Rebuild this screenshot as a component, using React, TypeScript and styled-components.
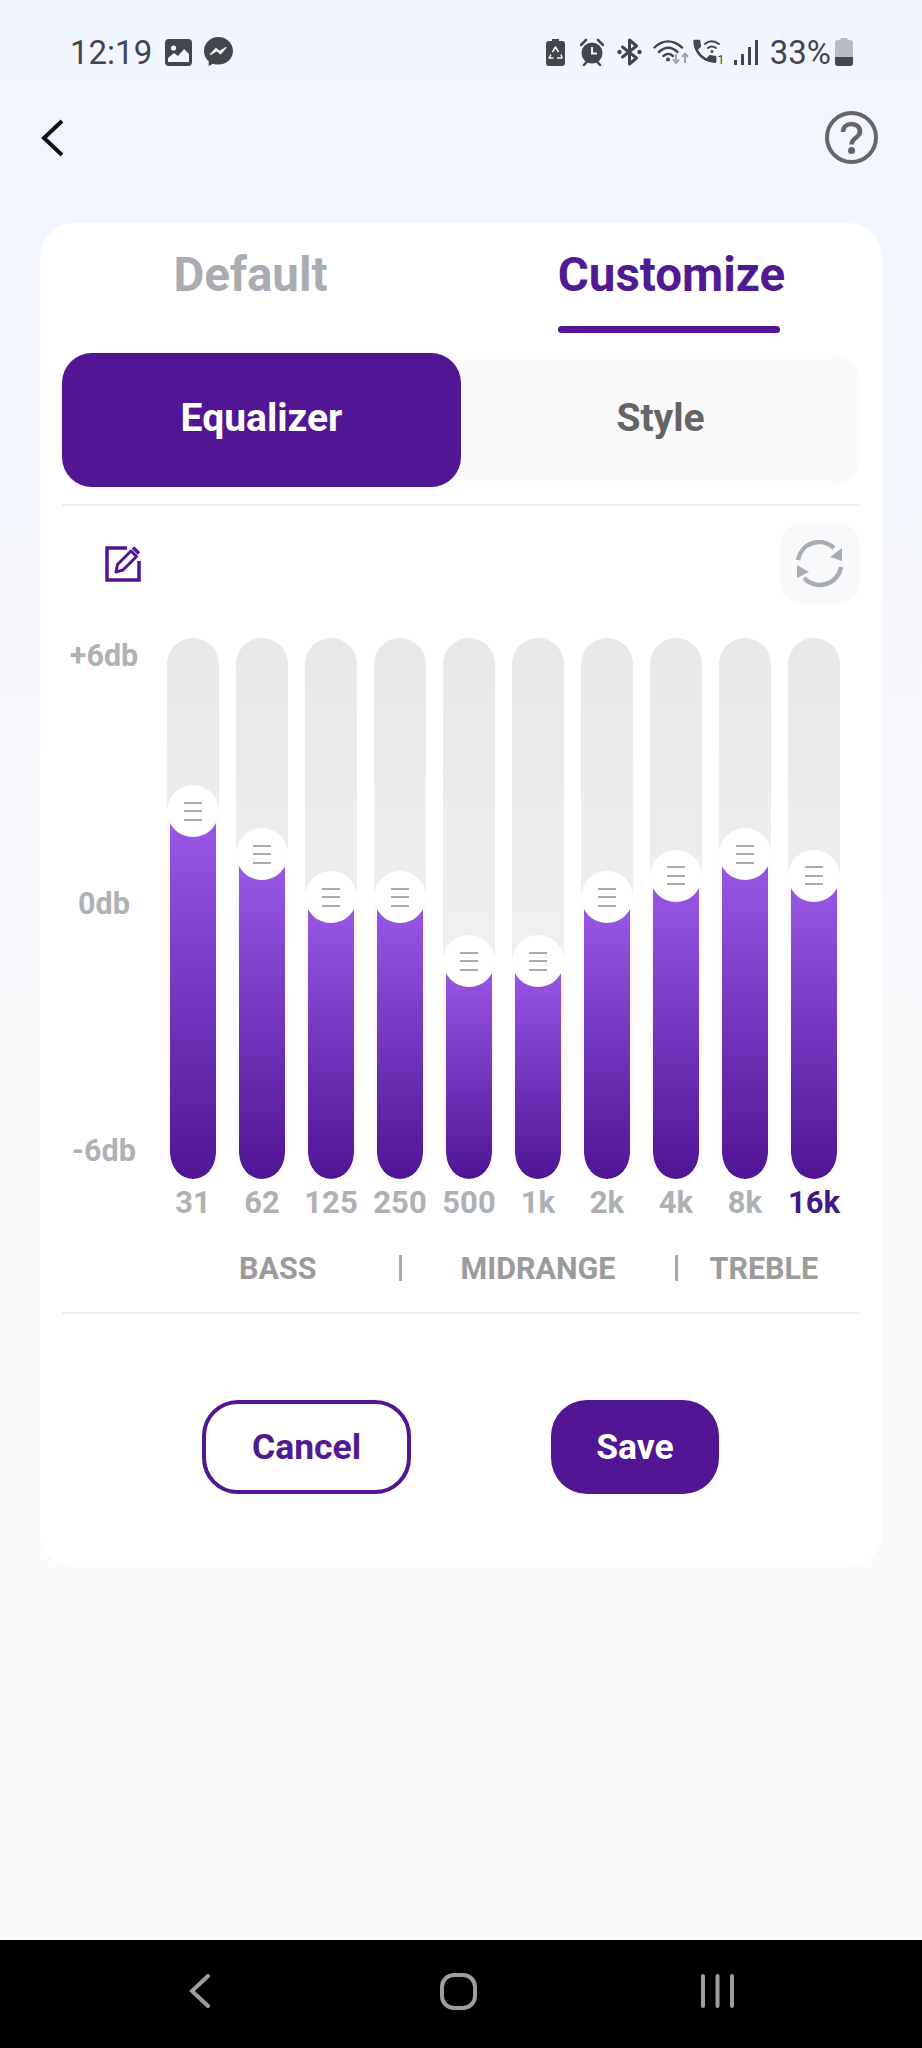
import styled, { createGlobalStyle } from 'styled-components';

const GlobalStyle = createGlobalStyle`
  html, body {
    margin: 0;
    padding: 0;
  }
  * {
    box-sizing: border-box;
  }
  body {
    font-family: Roboto, "Liberation Sans", sans-serif;
  }
`;

const Screen = styled.div`
  width: 922px;
  height: 2048px;
  display: flex;
  flex-direction: column;
  background: linear-gradient(#f1f5ff 0, #f3f6fe 260px, #fafafa 1300px);
  overflow: hidden;
`;

const StatusBar = styled.div`
  display: flex;
  align-items: center;
  height: 40px;
  margin-top: 32px;
  padding: 0 69px 0 70px;
  color: #44464c;
  font-size: 33px;
  svg {
    display: block;
    flex: none;
  }
`;

const Clock = styled.span`
  margin-right: 13px;
`;

const StatusGroup = styled.div`
  display: flex;
  align-items: center;
  gap: 12px;
`;

const StatusRight = styled.div`
  display: flex;
  align-items: center;
  margin-left: auto;
`;

const StatusSlot = styled.span<{ $gap: number }>`
  margin-left: ${(p) => p.$gap}px;
`;

const Battery = styled.span`
  margin: 0 4px 0 12px;
`;

const Header = styled.div`
  display: flex;
  justify-content: space-between;
  align-items: center;
  height: 53px;
  margin-top: 39px;
  padding: 0 44px 0 41px;
`;

const Card = styled.div`
  margin: 59px 40px 0;
  padding-bottom: 73px;
  background: #fff;
  border-radius: 34px;
`;

const Tabs = styled.div`
  display: grid;
  grid-template-columns: 1fr 1fr;
  padding-top: 25px;
`;

const Tab = styled.div<{ $active?: boolean }>`
  display: flex;
  flex-direction: column;
  align-items: center;
  font-size: 47.5px;
  line-height: 54px;
  font-weight: 700;
  color: ${(p) => (p.$active ? '#4f1a92' : '#a9adb2')};
`;

const TabLine = styled.div`
  width: 222px;
  height: 7px;
  margin: 24px 5px 0 0;
  border-radius: 4px;
  background: #521694;
`;

const Segment = styled.div`
  display: flex;
  height: 134px;
  margin: 20px 22px 0;
  background: #fafafa;
  border-radius: 30px;
`;

const SegmentItem = styled.div<{ $active?: boolean }>`
  flex: 1;
  display: flex;
  align-items: center;
  justify-content: center;
  padding-bottom: 4px;
  font-size: 39px;
  font-weight: 700;
  border-radius: 30px;
  color: ${(p) => (p.$active ? '#fff' : '#646464')};
  background: ${(p) => (p.$active ? '#521694' : 'transparent')};
`;

const Divider = styled.div<{ $top: number }>`
  height: 2px;
  margin: ${(p) => p.$top}px 22px 0;
  background: #f0f0f0;
`;

const Toolbar = styled.div`
  display: flex;
  justify-content: space-between;
  align-items: center;
  margin: 17px 22px 0;
  padding-left: 43px;
`;

const RefreshButton = styled.div`
  display: flex;
  align-items: center;
  justify-content: center;
  width: 80px;
  height: 81px;
  border-radius: 22px;
  background: #f8f9fa;
`;

const Chart = styled.div`
  display: flex;
  margin: 34px 22px 0;
`;

const Scale = styled.div`
  display: flex;
  flex-direction: column;
  justify-content: space-between;
  width: 84px;
  height: 541px;
  margin-right: 21px;
  padding: 1px 0 11px;
  text-align: center;
  font-size: 30.5px;
  line-height: 34px;
  font-weight: 700;
  color: #aeb1b5;
`;

const Bands = styled.div`
  display: flex;
  gap: 17px;
`;

const Band = styled.div`
  display: flex;
  flex-direction: column;
  align-items: center;
  width: 52px;
`;

const Track = styled.div`
  position: relative;
  width: 52px;
  height: 541px;
  border-radius: 26px;
  background: linear-gradient(#e8e8e8, #f0f0f0 65%);
`;

const Fill = styled.div`
  position: absolute;
  left: 0;
  right: 0;
  bottom: 0;
  border: solid #fdf9ff;
  border-width: 0 3px;
  border-radius: 0 0 26px 26px;
  background: linear-gradient(#9b59e8, #4f1594) padding-box;
`;

const Thumb = styled.div`
  position: absolute;
  top: -26px;
  left: -3px;
  width: 52px;
  height: 52px;
  display: flex;
  flex-direction: column;
  align-items: center;
  justify-content: center;
  gap: 6.5px;
  border-radius: 50%;
  background: #fff;
`;

const ThumbLine = styled.span`
  width: 18px;
  height: 2px;
  background: #aaaaaa;
`;

const Freq = styled.div<{ $active?: boolean }>`
  margin-top: 7px;
  white-space: nowrap;
  font-size: 31px;
  line-height: 34px;
  font-weight: 700;
  color: ${(p) => (p.$active ? '#421a84' : '#aeb1b4')};
`;

const BandLabels = styled.div`
  display: flex;
  align-items: center;
  height: 32px;
  margin-top: 32px;
  padding-left: 199px;
  color: #9b9b9b;
  font-size: 30.5px;
  font-weight: 700;
`;

const BandName = styled.span<{ $gap: number }>`
  margin-left: ${(p) => p.$gap}px;
`;

const BandRule = styled.span<{ $gap: number }>`
  width: 3px;
  height: 26px;
  margin-left: ${(p) => p.$gap}px;
  background: #a9a9a9;
`;

const Actions = styled.div`
  display: flex;
  gap: 140px;
  margin-top: 86px;
  padding-left: 162px;
`;

const Button = styled.div<{ $primary?: boolean }>`
  display: flex;
  align-items: center;
  justify-content: center;
  height: 94px;
  width: ${(p) => (p.$primary ? 168 : 209)}px;
  border-radius: 36px;
  font-size: 35.5px;
  font-weight: 700;
  color: ${(p) => (p.$primary ? '#fff' : '#4f1a92')};
  background: ${(p) => (p.$primary ? '#521694' : '#fff')};
  border: ${(p) => (p.$primary ? 'none' : '4px solid #521694')};
`;

const NavBar = styled.div`
  display: flex;
  align-items: center;
  justify-content: space-between;
  height: 108px;
  margin-top: auto;
  padding: 0 188px 6px 189px;
  background: #000;
  svg {
    display: block;
  }
`;

const NavHome = styled.span`
  margin-left: 6px;
`;

const gains = [4, 2, 0, 0, -3, -3, 0, 1, 2, 1];
const freqs = ['31', '62', '125', '250', '500', '1k', '2k', '4k', '8k', '16k'];

const ImageIcon = () => (
  <svg width="27" height="27" viewBox="0 0 27 27">
    <rect width="27" height="27" rx="4" fill="#44464c" />
    <circle cx="8.5" cy="9" r="2.6" fill="#f2f5ff" />
    <path d="M3 23v-4l6-5 4 3 6-7 5 5v8z" fill="#f2f5ff" />
  </svg>
);

const MessengerIcon = () => (
  <svg width="29" height="30" viewBox="0 0 29 30">
    <path d="M14.5 0C6.5 0 0 6 0 14c0 4.2 1.8 7.8 4.7 10.3V29l4.4-2.3c1.7.6 3.5.9 5.4.9 8 0 14.5-6 14.5-13.600S22.500 0 14.500 0z" fill="#44464c" />
    <path d="M6.500 17.500l5.500-6 3.500 3 6.500-4-5.500 6.300-3.500-3.200z" fill="#f2f5ff" stroke="#f2f5ff" strokeWidth="1.2" strokeLinejoin="round" />
  </svg>
);

const RecycleBatteryIcon = () => (
  <svg width="19" height="27" viewBox="0 0 19 27">
    <path d="M6 0h7v2h3a3 3 0 0 1 3 3v19a3 3 0 0 1-3 3H3a3 3 0 0 1-3-3V5a3 3 0 0 1 3-3h3z" fill="#44464c" />
    <path d="M6.500 13l3-5 3 5M15 15.500l1 3.500h-5M7.500 19H3l2-3.500" fill="none" stroke="#f2f5ff" strokeWidth="1.500" strokeLinejoin="round" />
  </svg>
);

const AlarmIcon = () => (
  <svg width="24" height="28" viewBox="0 0 24 28">
    <circle cx="12" cy="15" r="10.500" fill="#44464c" />
    <path d="M12 9v6.500h5" fill="none" stroke="#f2f5ff" strokeWidth="2" />
    <path d="M1 7l5-5M23 7l-5-5M4 27l3-3.500M20 27l-3-3.500" stroke="#44464c" strokeWidth="2.500" fill="none" strokeLinecap="round" />
  </svg>
);

const BluetoothIcon = () => (
  <svg width="25" height="28" viewBox="0 0 25 28">
    <path d="M12.500 14V2l7 6-14 11M12.500 14v12l7-6-14-11" fill="none" stroke="#44464c" strokeWidth="3" strokeLinejoin="round" strokeLinecap="round" />
    <circle cx="2.500" cy="14" r="2.200" fill="#44464c" />
    <circle cx="22.500" cy="14" r="2.200" fill="#44464c" />
  </svg>
);

const WifiIcon = () => (
  <svg width="36" height="26" viewBox="0 0 36 26">
    <path d="M1.500 8.500C10 .5 20 .5 29 8.500M6 13c6-5.500 12.500-5.500 18.500 0M10.500 17c3.500-3 6-3 9.500 0" fill="none" stroke="#44464c" strokeWidth="2.400" strokeLinecap="round" />
    <circle cx="15" cy="20.500" r="2" fill="#44464c" />
    <path d="M23 15v8M20 20.500l3 3.500 3-3.500M32 24v-9M29 18l3-3.500 3 3.500" fill="none" stroke="#a3a5ab" strokeWidth="2" />
  </svg>
);

const CallIcon = () => (
  <svg width="31" height="27" viewBox="0 0 31 27">
    <g transform="translate(-3.500 -3) scale(1.280)">
      <path d="M6.620 10.790c1.440 2.830 3.760 5.140 6.590 6.590l2.200-2.200c.27-.27.67-.36 1.020-.24 1.120.37 2.330.57 3.570.57.55 0 1 .45 1 1V20c0 .55-.45 1-1 1-9.390 0-17-7.610-17-17 0-.55.450-1 1-1h3.500c.55 0 1 .45 1 1 0 1.250.2 2.450.57 3.570.11.35.03.74-.25 1.020l-2.200 2.200z" fill="#44464c" />
    </g>
    <path d="M12 5c4-3.500 9-3.500 14 0M15 9c2.500-2 5-2 8 0" fill="none" stroke="#44464c" strokeWidth="2" strokeLinecap="round" />
    <circle cx="19" cy="12.500" r="1.500" fill="#44464c" />
    <text x="24.500" y="25" fontSize="12" fontFamily="Roboto, sans-serif" fill="#44464c">1</text>
  </svg>
);

const SignalIcon = () => (
  <svg width="24" height="25" viewBox="0 0 24 25">
    <rect x="0" y="20" width="3" height="5" fill="#44464c" />
    <rect x="7" y="14" width="3" height="11" fill="#44464c" />
    <rect x="14" y="7" width="3" height="18" fill="#44464c" />
    <rect x="21" y="0" width="3" height="25" fill="#44464c" />
  </svg>
);

const BatteryIcon = () => (
  <svg width="18" height="28" viewBox="0 0 18 28">
    <path d="M5.500 0h7v2H15a3 3 0 0 1 3 3v20a3 3 0 0 1-3 3H3a3 3 0 0 1-3-3V5a3 3 0 0 1 3-3h2.500z" fill="#b9bac4" />
    <path d="M0 19h18v6a3 3 0 0 1-3 3H3a3 3 0 0 1-3-3z" fill="#44464c" />
  </svg>
);

const BackIcon = () => (
  <svg width="23" height="38" viewBox="0 0 23 38">
    <path d="M21 2L3 19l18 17" fill="none" stroke="#111" strokeWidth="4" />
  </svg>
);

const HelpIcon = () => (
  <svg width="53" height="53" viewBox="0 0 53 53">
    <circle cx="26.500" cy="26.500" r="24.500" fill="none" stroke="#666" strokeWidth="4" />
    <path d="M18 21c0-5 3.800-8 8.500-8s8.500 3 8.500 7.500c0 6-8.500 6.500-8.500 13" fill="none" stroke="#666" strokeWidth="4.500" />
    <circle cx="26.500" cy="39.500" r="3.500" fill="#666" />
  </svg>
);

const EditIcon = () => (
  <svg width="36" height="36" viewBox="0 0 36 36">
    <path d="M22 2H2v32h32V15" fill="none" stroke="#521694" strokeWidth="3.500" />
    <path d="M11 26l1.500-7.500L26 5l5.500 5.500L18 24z" fill="none" stroke="#521694" strokeWidth="3" strokeLinejoin="round" />
    <path d="M28 1.500l6 6" stroke="#521694" strokeWidth="3.500" />
  </svg>
);

const RefreshIcon = () => (
  <svg width="48" height="48" viewBox="0 0 48 48">
    <path d="M2 20A21.500 21.500 0 0 1 38 8M45 27A21.500 21.500 0 0 1 8 38" fill="none" stroke="#a9adb1" strokeWidth="4.500" />
    <path d="M46 8V21L34 17zM1 25V38L13 32z" fill="#a9adb1" />
  </svg>
);

const NavBackIcon = () => (
  <svg width="21" height="34" viewBox="0 0 21 34">
    <path d="M19 2L3 17l16 15" fill="none" stroke="#9e9e9e" strokeWidth="4" strokeLinecap="round" />
  </svg>
);

const NavHomeIcon = () => (
  <svg width="37" height="37" viewBox="0 0 37 37">
    <rect x="2" y="2" width="33" height="33" rx="12" fill="none" stroke="#9e9e9e" strokeWidth="4" />
  </svg>
);

const NavRecentsIcon = () => (
  <svg width="33" height="34" viewBox="0 0 33 34">
    <path d="M2 2v30M16.500 2v30M31 2v30" fill="none" stroke="#9e9e9e" strokeWidth="4" strokeLinecap="round" />
  </svg>
);

const App = () => {
  return (
    <Screen>
      <GlobalStyle />
      <StatusBar>
        <Clock>12:19</Clock>
        <StatusGroup>
          <ImageIcon />
          <MessengerIcon />
        </StatusGroup>
        <StatusRight>
          <RecycleBatteryIcon />
          <StatusSlot $gap={15}>
            <AlarmIcon />
          </StatusSlot>
          <StatusSlot $gap={13}>
            <BluetoothIcon />
          </StatusSlot>
          <StatusSlot $gap={11}>
            <WifiIcon />
          </StatusSlot>
          <StatusSlot $gap={4}>
            <CallIcon />
          </StatusSlot>
          <StatusSlot $gap={10}>
            <SignalIcon />
          </StatusSlot>
          <Battery>33%</Battery>
          <BatteryIcon />
        </StatusRight>
      </StatusBar>
      <Header>
        <BackIcon />
        <HelpIcon />
      </Header>
      <Card>
        <Tabs>
          <Tab>Default</Tab>
          <Tab $active>
            Customize
            <TabLine />
          </Tab>
        </Tabs>
        <Segment>
          <SegmentItem $active>Equalizer</SegmentItem>
          <SegmentItem>Style</SegmentItem>
        </Segment>
        <Divider $top={17} />
        <Toolbar>
          <EditIcon />
          <RefreshButton>
            <RefreshIcon />
          </RefreshButton>
        </Toolbar>
        <Chart>
          <Scale>
            <span>+6db</span>
            <span>0db</span>
            <span>-6db</span>
          </Scale>
          <Bands>
            {freqs.map((freq, i) => (
              <Band key={freq}>
                <Track>
                  <Fill style={{ height: 282 + gains[i] * 21.4 }}>
                    <Thumb>
                      <ThumbLine />
                      <ThumbLine />
                      <ThumbLine />
                    </Thumb>
                  </Fill>
                </Track>
                <Freq $active={freq === '16k'}>{freq}</Freq>
              </Band>
            ))}
          </Bands>
        </Chart>
        <BandLabels>
          <BandName $gap={0}>BASS</BandName>
          <BandRule $gap={82} />
          <BandName $gap={59}>MIDRANGE</BandName>
          <BandRule $gap={60} />
          <BandName $gap={31}>TREBLE</BandName>
        </BandLabels>
        <Divider $top={28} />
        <Actions>
          <Button>Cancel</Button>
          <Button $primary>Save</Button>
        </Actions>
      </Card>
      <NavBar>
        <NavBackIcon />
        <NavHome>
          <NavHomeIcon />
        </NavHome>
        <NavRecentsIcon />
      </NavBar>
    </Screen>
  );
};

export default App;
